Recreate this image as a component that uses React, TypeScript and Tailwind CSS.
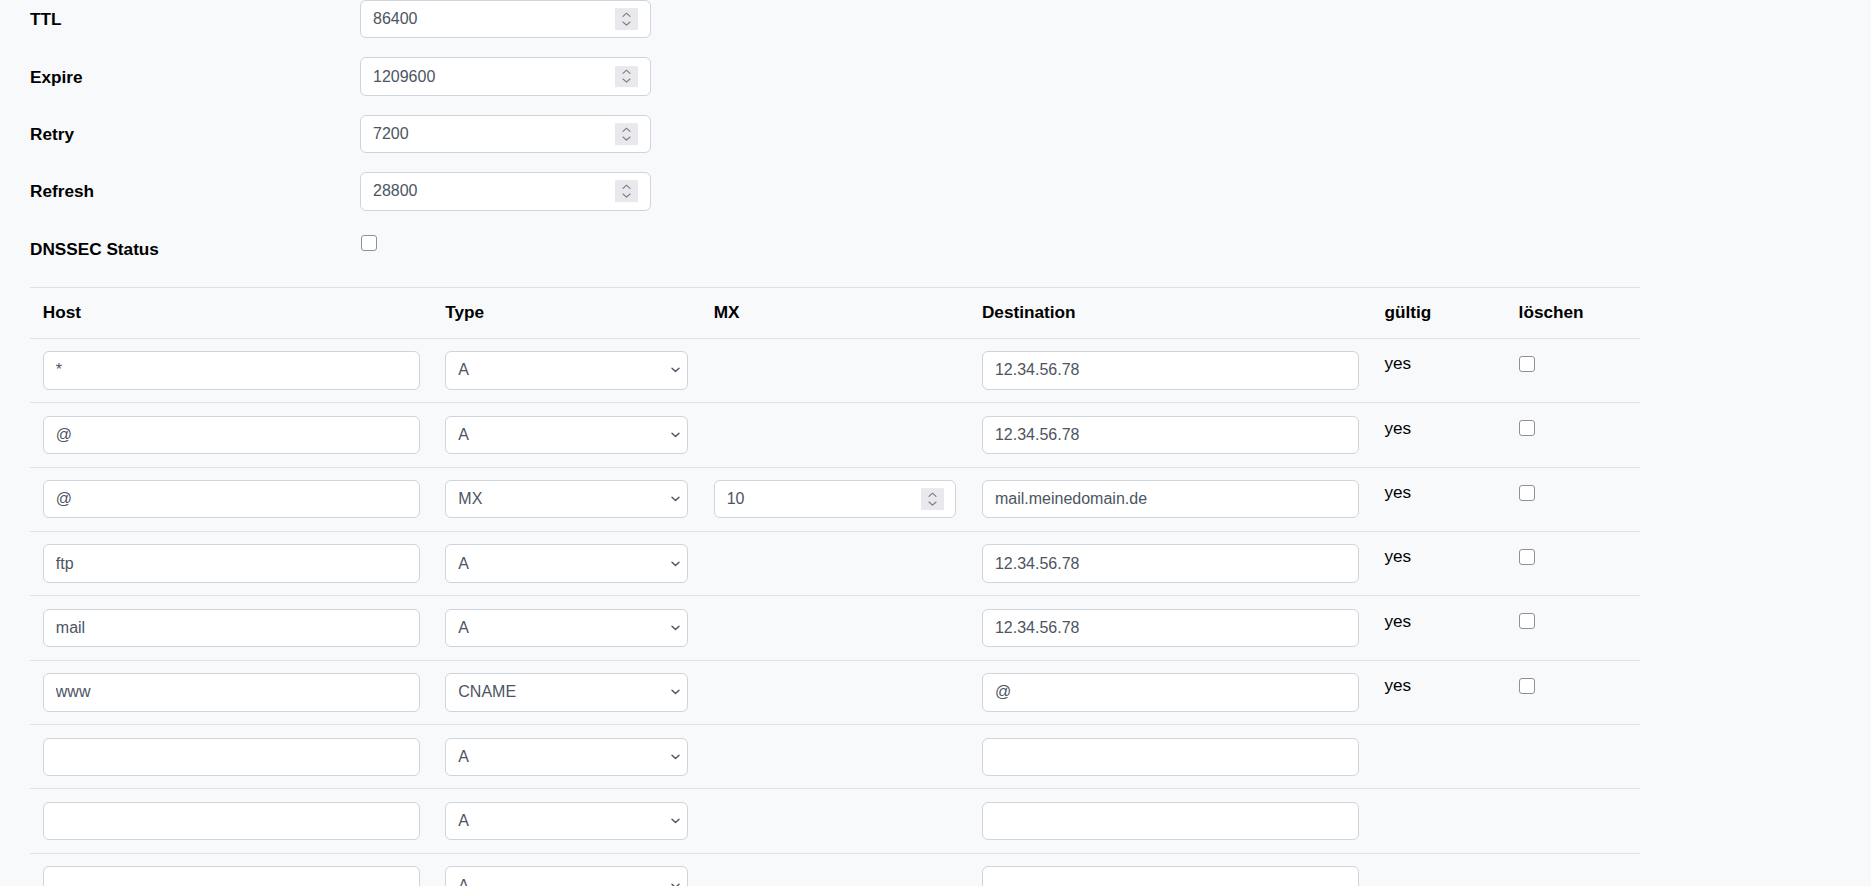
import React from 'react'

const SOA_FIELDS = [
    { label: 'TTL', value: '86400' },
    { label: 'Expire', value: '1209600' },
    { label: 'Retry', value: '7200' },
    { label: 'Refresh', value: '28800' },
]

type Record = { host: string; type: string; mx?: string; dest: string; valid: boolean }

const RECORDS: Record[] = [
    { host: '*', type: 'A', dest: '12.34.56.78', valid: true },
    { host: '@', type: 'A', dest: '12.34.56.78', valid: true },
    { host: '@', type: 'MX', mx: '10', dest: 'mail.meinedomain.de', valid: true },
    { host: 'ftp', type: 'A', dest: '12.34.56.78', valid: true },
    { host: 'mail', type: 'A', dest: '12.34.56.78', valid: true },
    { host: 'www', type: 'CNAME', dest: '@', valid: true },
    { host: '', type: 'A', dest: '', valid: false },
    { host: '', type: 'A', dest: '', valid: false },
    { host: '', type: 'A', dest: '', valid: false },
    { host: '', type: 'A', dest: '', valid: false },
]

const inputCls =
    'block w-full h-[38.4px] px-[12px] text-[16px] leading-6 text-[#4b5563] bg-white border border-[#ced4da] rounded-[6px] outline-none'

const checkCls =
    'appearance-none block m-0 w-4 h-4 bg-white border-[1.5px] border-[#8f8f9d] rounded-[3px] checked:bg-[#0075ff] checked:border-[#0075ff]'

// number input with the little grey spin box on the right
function NumberInput({ value, className = '' }: { value: string; className?: string }) {
    return (
        <div className={'relative ' + className}>
            <input
                type="number"
                defaultValue={value}
                className={inputCls + ' pr-10 [appearance:textfield] [&::-webkit-inner-spin-button]:appearance-none [&::-webkit-outer-spin-button]:appearance-none'}
            />
            <div className="pointer-events-none absolute right-[12.7px] top-1/2 -translate-y-1/2 w-[23px] h-[21.7px] bg-[#e9e9ed] flex flex-col items-center justify-center gap-[4px]">
                <svg width="9" height="5" viewBox="0 0 9 5" fill="none">
                    <path d="M1 4.2 4.5 1 8 4.2" stroke="#7d7d88" strokeWidth="1.2" strokeLinecap="round" strokeLinejoin="round" />
                </svg>
                <svg width="9" height="5" viewBox="0 0 9 5" fill="none">
                    <path d="M1 0.8 4.5 4 8 0.8" stroke="#7d7d88" strokeWidth="1.2" strokeLinecap="round" strokeLinejoin="round" />
                </svg>
            </div>
        </div>
    )
}

function TypeSelect({ value }: { value: string }) {
    return (
        <div className="relative">
            <select defaultValue={value} className={inputCls + ' appearance-none pr-8'}>
                <option>A</option>
                <option>AAAA</option>
                <option>CNAME</option>
                <option>MX</option>
                <option>TXT</option>
            </select>
            <svg
                className="pointer-events-none absolute right-[8px] top-1/2 -translate-y-1/2"
                width="9"
                height="6"
                viewBox="0 0 9 6"
                fill="none"
            >
                <path d="M1 1.2 4.5 4.6 8 1.2" stroke="#4b5563" strokeWidth="1.4" strokeLinecap="round" strokeLinejoin="round" />
            </svg>
        </div>
    )
}

export default function App() {
    return (
        <div className="h-[886px] overflow-hidden bg-[#f8f9fa] text-black text-[17.2px] leading-[1.5] font-['Liberation_Sans',Arial,sans-serif]">
            <div className="ml-[30px] w-[1610px] flex flex-col gap-[19px]">
                {/* SOA values */}
                {SOA_FIELDS.map((f) => (
                    <div key={f.label} className="flex items-center h-[38.4px]">
                        <label className="w-[330px] font-bold pt-[2px]">{f.label}</label>
                        <NumberInput value={f.value} className="w-[291px]" />
                    </div>
                ))}

                <div className="flex h-[38.4px]">
                    <div className="w-[330px] h-full flex items-center font-bold pt-[2px]">DNSSEC Status</div>
                    <input type="checkbox" className={checkCls + ' mt-[5.4px] ml-[0.7px]'} />
                </div>

                {/* Records table */}
                <table className="w-full table-fixed border-collapse">
                    <colgroup>
                        <col className="w-[25%]" />
                        <col className="w-[16.667%]" />
                        <col className="w-[16.667%]" />
                        <col className="w-[25%]" />
                        <col className="w-[8.333%]" />
                        <col className="w-[8.333%]" />
                    </colgroup>
                    <thead>
                        <tr className="border-t border-b border-[#dee2e6]">
                            {['Host', 'Type', 'MX', 'Destination', 'gültig', 'löschen'].map((h) => (
                                <th key={h} className="text-left font-bold px-[12.8px] py-[12px]">
                                    {h}
                                </th>
                            ))}
                        </tr>
                    </thead>
                    <tbody>
                        {RECORDS.map((r, i) => (
                            <tr key={i} className="border-b border-[#dee2e6]">
                                <td className="align-top px-[12.8px] py-[12.5px]">
                                    <input type="text" defaultValue={r.host} className={inputCls} />
                                </td>
                                <td className="align-top px-[12.8px] py-[12.5px]">
                                    <TypeSelect value={r.type} />
                                </td>
                                <td className="align-top px-[12.8px] py-[12.5px]">
                                    {r.mx && <NumberInput value={r.mx} />}
                                </td>
                                <td className="align-top px-[12.8px] py-[12.5px]">
                                    <input type="text" defaultValue={r.dest} className={inputCls} />
                                </td>
                                <td className="align-top px-[12.8px] py-[12.5px]">{r.valid ? 'yes' : ''}</td>
                                <td className="align-top px-[12.8px] py-[12.5px]">
                                    {r.valid && <input type="checkbox" className={checkCls + ' mt-[4.5px]'} />}
                                </td>
                            </tr>
                        ))}
                    </tbody>
                </table>
            </div>
        </div>
    )
}
